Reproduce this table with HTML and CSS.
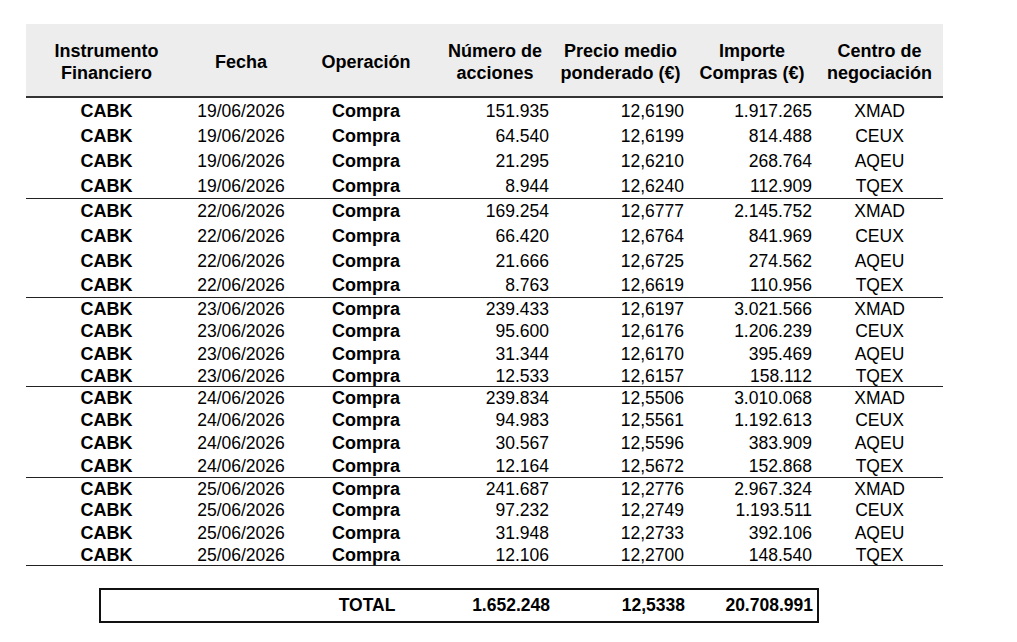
FILE: index.html
```html
<!DOCTYPE html>
<html lang="es">
<head>
<meta charset="UTF-8">
<title>Operaciones CABK</title>
<link rel="stylesheet" href="styles.css">
</head>
<body>

<div class="page">
  <!-- tabla de operaciones -->
  <table class="ops">
    <colgroup>
      <col class="c1"><col class="c2"><col class="c3"><col class="c4"><col class="c5"><col class="c6"><col class="c7">
    </colgroup>
    <thead>
      <tr>
        <th>Instrumento<br>Financiero</th>
        <th>Fecha</th>
        <th>Operación</th>
        <th>Número de<br>acciones</th>
        <th>Precio medio<br>ponderado (€)</th>
        <th>Importe<br>Compras (€)</th>
        <th>Centro de<br>negociación</th>
      </tr>
    </thead>
    <tbody>
      <tr class="h25"><td class="b">CABK</td><td>19/06/2026</td><td class="b">Compra</td><td class="n">151.935</td><td class="n">12,6190</td><td class="n">1.917.265</td><td>XMAD</td></tr>
      <tr class="h25"><td class="b">CABK</td><td>19/06/2026</td><td class="b">Compra</td><td class="n">64.540</td><td class="n">12,6199</td><td class="n">814.488</td><td>CEUX</td></tr>
      <tr class="h25"><td class="b">CABK</td><td>19/06/2026</td><td class="b">Compra</td><td class="n">21.295</td><td class="n">12,6210</td><td class="n">268.764</td><td>AQEU</td></tr>
      <tr class="h26 end"><td class="b">CABK</td><td>19/06/2026</td><td class="b">Compra</td><td class="n">8.944</td><td class="n">12,6240</td><td class="n">112.909</td><td>TQEX</td></tr>

      <tr class="h24"><td class="b">CABK</td><td>22/06/2026</td><td class="b">Compra</td><td class="n">169.254</td><td class="n">12,6777</td><td class="n">2.145.752</td><td>XMAD</td></tr>
      <tr class="h26"><td class="b">CABK</td><td>22/06/2026</td><td class="b">Compra</td><td class="n">66.420</td><td class="n">12,6764</td><td class="n">841.969</td><td>CEUX</td></tr>
      <tr class="h24"><td class="b">CABK</td><td>22/06/2026</td><td class="b">Compra</td><td class="n">21.666</td><td class="n">12,6725</td><td class="n">274.562</td><td>AQEU</td></tr>
      <tr class="h25 end"><td class="b">CABK</td><td>22/06/2026</td><td class="b">Compra</td><td class="n">8.763</td><td class="n">12,6619</td><td class="n">110.956</td><td>TQEX</td></tr>

      <tr class="h22"><td class="b">CABK</td><td>23/06/2026</td><td class="b">Compra</td><td class="n">239.433</td><td class="n">12,6197</td><td class="n">3.021.566</td><td>XMAD</td></tr>
      <tr class="h22"><td class="b">CABK</td><td>23/06/2026</td><td class="b">Compra</td><td class="n">95.600</td><td class="n">12,6176</td><td class="n">1.206.239</td><td>CEUX</td></tr>
      <tr class="h23"><td class="b">CABK</td><td>23/06/2026</td><td class="b">Compra</td><td class="n">31.344</td><td class="n">12,6170</td><td class="n">395.469</td><td>AQEU</td></tr>
      <tr class="h22 end"><td class="b">CABK</td><td>23/06/2026</td><td class="b">Compra</td><td class="n">12.533</td><td class="n">12,6157</td><td class="n">158.112</td><td>TQEX</td></tr>

      <tr class="h22"><td class="b">CABK</td><td>24/06/2026</td><td class="b">Compra</td><td class="n">239.834</td><td class="n">12,5506</td><td class="n">3.010.068</td><td>XMAD</td></tr>
      <tr class="h22"><td class="b">CABK</td><td>24/06/2026</td><td class="b">Compra</td><td class="n">94.983</td><td class="n">12,5561</td><td class="n">1.192.613</td><td>CEUX</td></tr>
      <tr class="h23"><td class="b">CABK</td><td>24/06/2026</td><td class="b">Compra</td><td class="n">30.567</td><td class="n">12,5596</td><td class="n">383.909</td><td>AQEU</td></tr>
      <tr class="h24 end"><td class="b">CABK</td><td>24/06/2026</td><td class="b">Compra</td><td class="n">12.164</td><td class="n">12,5672</td><td class="n">152.868</td><td>TQEX</td></tr>

      <tr class="h21"><td class="b">CABK</td><td>25/06/2026</td><td class="b">Compra</td><td class="n">241.687</td><td class="n">12,2776</td><td class="n">2.967.324</td><td>XMAD</td></tr>
      <tr class="h22"><td class="b">CABK</td><td>25/06/2026</td><td class="b">Compra</td><td class="n">97.232</td><td class="n">12,2749</td><td class="n">1.193.511</td><td>CEUX</td></tr>
      <tr class="h23"><td class="b">CABK</td><td>25/06/2026</td><td class="b">Compra</td><td class="n">31.948</td><td class="n">12,2733</td><td class="n">392.106</td><td>AQEU</td></tr>
      <tr class="h22 end"><td class="b">CABK</td><td>25/06/2026</td><td class="b">Compra</td><td class="n">12.106</td><td class="n">12,2700</td><td class="n">148.540</td><td>TQEX</td></tr>
    </tbody>
  </table>

  <!-- total -->
  <table class="total">
    <colgroup>
      <col class="t1"><col class="c2"><col class="c3"><col class="c4"><col class="c5"><col class="c6">
    </colgroup>
    <tr>
      <td></td><td></td><td>TOTAL</td><td class="n">1.652.248</td><td class="n">12,5338</td><td class="n">20.708.991</td>
    </tr>
  </table>
</div>

</body>
</html>
```

FILE: styles.css
```css
body {
  margin: 0;
  background: #fff;
  color: #000;
  font-family: "Liberation Sans", Arial, sans-serif;
  font-size: 17.5px;
}

.page {
  padding: 24px 0 0 26px;
}

table {
  border-collapse: separate;
  border-spacing: 0;
  table-layout: fixed;
}

.ops {
  width: 917px;
}

.c1 { width: 161px; }
.c2 { width: 108px; }
.c3 { width: 142px; }
.c4 { width: 116px; }
.c5 { width: 135px; }
.c6 { width: 128px; }
.c7 { width: 127px; }
.t1 { width: 87px; }

/* cabecera */
.ops th {
  background: #ededed;
  height: 68px;
  padding: 4px 0 0;
  font-size: 18px;
  font-weight: bold;
  line-height: 22px;
  text-align: center;
  vertical-align: middle;
  border-bottom: 2px solid #333;
}

.ops td {
  padding: 0;
  line-height: 20px;
  text-align: center;
  vertical-align: middle;
  white-space: nowrap;
}

.b {
  font-weight: bold;
  font-size: 18px;
}

.ops td.n,
.total td.n {
  text-align: right;
  padding-right: 4px;
}

.h21 { height: 21px; }
.h22 { height: 22px; }
.h23 { height: 23px; }
.h24 { height: 24px; }
.h25 { height: 25px; }
.h26 { height: 26px; }

.ops tr.end td {
  border-bottom: 1px solid #222;
}

/* caja del total */
.total {
  margin: 22px 0 0 73px;
  width: 715px;
  height: 35px;
  border: 2px solid #111;
  font-weight: bold;
}

.total td {
  padding: 0;
  text-align: center;
  vertical-align: middle;
  white-space: nowrap;
}
```
